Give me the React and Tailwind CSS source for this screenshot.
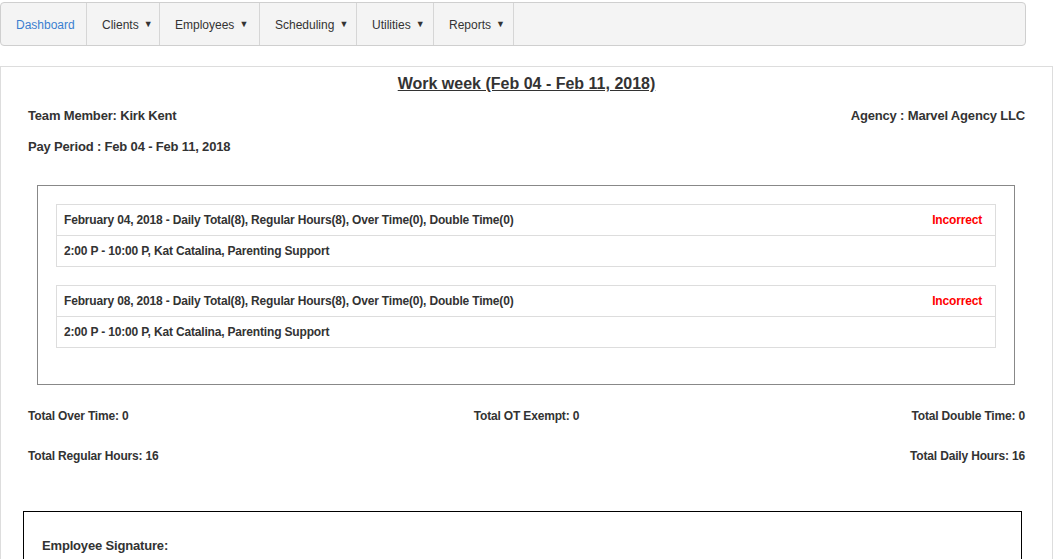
const NAV = [
  { label: "Dashboard", w: "w-[86px]", active: true },
  { label: "Clients", w: "w-[73px]", caret: true },
  { label: "Employees", w: "w-[100px]", caret: true },
  { label: "Scheduling", w: "w-[97px]", caret: true },
  { label: "Utilities", w: "w-[77px]", caret: true },
  { label: "Reports", w: "w-[80px]", caret: true },
];

const DAYS = [
  {
    head: "February 04, 2018 - Daily Total(8), Regular Hours(8), Over Time(0), Double Time(0)",
    shift: "2:00 P - 10:00 P, Kat Catalina, Parenting Support",
  },
  {
    head: "February 08, 2018 - Daily Total(8), Regular Hours(8), Over Time(0), Double Time(0)",
    shift: "2:00 P - 10:00 P, Kat Catalina, Parenting Support",
  },
];

function Navbar() {
  return (
    <nav className="mt-[2px] flex h-[44px] w-[1026px] rounded border border-[#cfcfcf] bg-[#f4f4f4]">
      {NAV.map((n) => (
        <div
          key={n.label}
          className={`flex ${n.w} items-center gap-[5px] border-r border-[#d6d6d6] pl-[15px] pt-[2px] text-[12px] ${
            n.active ? "text-[#3b7fd0]" : "text-[#333]"
          }`}
        >
          <span>{n.label}</span>
          {n.caret && <span className="text-[9px]">▼</span>}
        </div>
      ))}
    </nav>
  );
}

function DayCard({ day }) {
  return (
    <div className="mb-[18px] border border-[#dddddd]">
      <div className="flex h-[31px] items-center justify-between border-b border-[#dddddd] pl-[7px] pr-[13px]">
        <span>{day.head}</span>
        <span className="text-[#ff0000]">Incorrect</span>
      </div>
      <div className="flex h-[30px] items-center pl-[7px]">{day.shift}</div>
    </div>
  );
}

export default function App() {
  return (
    <div className="w-[1053px] bg-white font-['Liberation_Sans',Arial,sans-serif] text-[#333]">
      <Navbar />
      <section className="mt-[20px] border border-[#dddddd] px-[27px] pb-[40px] tracking-[-0.17px]">
        <h1 className="pt-[6px] text-center text-[16px] font-bold leading-[22px] tracking-normal underline">
          Work week (Feb 04 - Feb 11, 2018)
        </h1>
        <div className="mt-[13px] flex justify-between text-[13px] font-bold leading-[16px]">
          <span>Team Member: Kirk Kent</span>
          <span>Agency : Marvel Agency LLC</span>
        </div>
        <div className="mt-[15px] text-[13px] font-bold leading-[16px]">
          Pay Period : Feb 04 - Feb 11, 2018
        </div>

        <div className="ml-[9px] mr-[10px] mt-[30px] border border-[#888888] px-[18px] pb-[18px] pt-[18px] text-[12px] font-bold">
          {DAYS.map((d, i) => (
            <DayCard key={i} day={d} />
          ))}
        </div>

        <div className="mt-[24px] grid grid-cols-3 text-[12px] font-bold leading-[14px]">
          <span>Total Over Time: 0</span>
          <span className="text-center">Total OT Exempt: 0</span>
          <span className="text-right">Total Double Time: 0</span>
        </div>
        <div className="mt-[26px] flex justify-between text-[12px] font-bold leading-[14px]">
          <span>Total Regular Hours: 16</span>
          <span>Total Daily Hours: 16</span>
        </div>

        <div className="-ml-[5px] mr-[3px] mt-[48px] h-[80px] border border-black px-[18px] pt-[24px] text-[13px] font-bold">
          Employee Signature:
        </div>
      </section>
    </div>
  );
}
